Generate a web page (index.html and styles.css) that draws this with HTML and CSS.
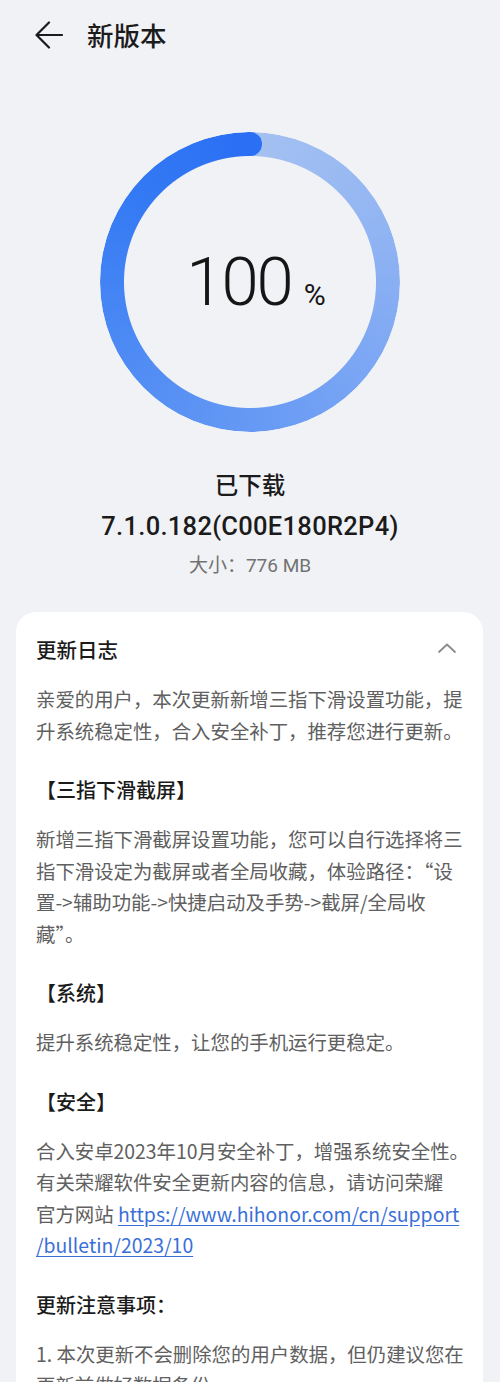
FILE: index.html
```html
<!DOCTYPE html>
<html lang="zh-CN">
<head>
<meta charset="utf-8">
<title>新版本</title>
<link rel="stylesheet" href="styles.css">
</head>
<body>
<div class="page">
  <header class="topbar">
    <svg class="back" width="28" height="28" viewBox="0 0 28 28" aria-hidden="true">
      <path d="M27 14H2M14 1.5L1.5 14 14 26.5" fill="none" stroke="#1b1b1b" stroke-width="2.2" stroke-linecap="round" stroke-linejoin="round"/>
    </svg>
    <h1 class="title">新版本</h1>
  </header>

  <section class="progress">
    <div class="ring">
      <div class="ring-track"></div>
      <div class="ring-cap"></div>
      <div class="ring-value"><span class="num">100</span><span class="pct">%</span></div>
    </div>
  </section>

  <section class="info">
    <div class="status">已下载</div>
    <div class="version">7.1.0.182(C00E180R2P4)</div>
    <div class="size">大小：776 MB</div>
  </section>

  <section class="card">
    <div class="card-head">
      <h2 class="card-title">更新日志</h2>
      <svg class="chev" width="20" height="12" viewBox="0 0 20 12" aria-hidden="true">
        <path d="M2 10L10 2.5 18 10" fill="none" stroke="#8a8a8a" stroke-width="1.8" stroke-linecap="round" stroke-linejoin="round"/>
      </svg>
    </div>
    <p class="para first">亲爱的用户，本次更新新增三指下滑设置功能，提<br>升系统稳定性，合入安全补丁，推荐您进行更新。</p>

    <h3 class="sec">【三指下滑截屏】</h3>
    <p class="para">新增三指下滑截屏设置功能，您可以自行选择将三<br>指下滑设定为截屏或者全局收藏，体验路径：“设<br>置-&gt;辅助功能-&gt;快捷启动及手势-&gt;截屏/全局收<br>藏”。</p>

    <h3 class="sec">【系统】</h3>
    <p class="para">提升系统稳定性，让您的手机运行更稳定。</p>

    <h3 class="sec">【安全】</h3>
    <p class="para">合入安卓2023年10月安全补丁，增强系统安全性。<br>有关荣耀软件安全更新内容的信息，请访问荣耀<br>官方网站 <a class="link" href="#">https://www.hihonor.com/cn/support<br>/bulletin/2023/10</a></p>

    <h3 class="sec">更新注意事项：</h3>
    <p class="para">1. 本次更新不会删除您的用户数据，但仍建议您在<br>更新前做好数据备份。</p>
  </section>
</div>
</body>
</html>
```

FILE: styles.css
```css
html, body {
  margin: 0;
  padding: 0;
}
body {
  background: #f1f2f6;
  font-family: Roboto, "Noto Sans CJK SC", sans-serif;
  color: #1b1b1b;
  height: 1382px;
  overflow: hidden;
}
.page {
  display: flex;
  flex-direction: column;
}

/* header */
.topbar {
  height: 70px;
  display: flex;
  align-items: center;
  padding-left: 35px;
  box-sizing: border-box;
}
.back {
  display: block;
  margin-top: -1px;
}
.title {
  margin: 0 0 0 24px;
  font-family: "Noto Sans CJK SC", sans-serif;
  font-size: 26.5px;
  font-weight: 500;
  line-height: 36px;
  color: #1b1b1b;
}

/* ring */
.progress {
  display: flex;
  justify-content: center;
  margin-top: 62px;
}
.ring {
  position: relative;
  width: 300px;
  height: 300px;
}
.ring-track {
  width: 300px;
  height: 300px;
  border-radius: 50%;
  background: conic-gradient(from 0deg,
    #a4c1f1 0deg,
    #94b6f2 60deg,
    #7ea8f4 120deg,
    #6599f4 180deg,
    #4a88f4 250deg,
    #3379f4 310deg,
    #2a6ff4 360deg);
  -webkit-mask: radial-gradient(circle, transparent 125.5px, #000 126.5px);
  mask: radial-gradient(circle, transparent 125.5px, #000 126.5px);
}
.ring-cap {
  position: absolute;
  top: 0;
  left: 138px;
  width: 24px;
  height: 24px;
  border-radius: 50%;
  background: #2a6ff4;
}
.ring-value {
  position: absolute;
  inset: 0;
  display: flex;
  align-items: baseline;
  justify-content: center;
  padding-top: 110px;
  box-sizing: border-box;
  padding-left: 12px;
}
.num {
  font-family: Roboto, sans-serif;
  font-weight: 300;
  font-size: 67px;
  letter-spacing: -2px;
  line-height: 80px;
  color: #151515;
}
.pct {
  font-family: Roboto, sans-serif;
  font-weight: 400;
  font-size: 30px;
  margin-left: 12px;
  color: #151515;
}

/* info */
.info {
  display: flex;
  flex-direction: column;
  align-items: center;
  margin-top: 36px;
}
.status {
  font-family: "Noto Sans CJK SC", sans-serif;
  font-size: 23.5px;
  font-weight: 500;
  line-height: 32px;
  color: #1b1b1b;
}
.version {
  margin-top: 10px;
  font-family: Roboto, "Noto Sans CJK SC", sans-serif;
  font-size: 25.5px;
  font-weight: 500;
  letter-spacing: 0.3px;
  line-height: 32px;
  color: #1b1b1b;
}
.size {
  margin-top: 10px;
  font-family: Roboto, "Noto Sans CJK SC", sans-serif;
  font-size: 19px;
  line-height: 28px;
  color: #727272;
}

/* card */
.card {
  margin: 32px 17px 0 16px;
  background: #ffffff;
  border-radius: 20px 20px 0 0;
  padding: 22px 14px 40px 20px;
}
.card-head {
  display: flex;
  align-items: center;
  justify-content: space-between;
  padding-right: 12px;
}
.card-title {
  margin: 0;
  font-family: "Noto Sans CJK SC", sans-serif;
  font-size: 20.5px;
  font-weight: 500;
  line-height: 30px;
  color: #1b1b1b;
}
.chev {
  display: block;
  margin-top: -2px;
}
.sec {
  margin: 29px 0 0 0;
  font-family: "Noto Sans CJK SC", sans-serif;
  font-size: 20px;
  font-weight: 500;
  line-height: 30px;
  color: #1b1b1b;
}
.para {
  margin: 18px 0 0 0;
  font-family: "Noto Sans CJK SC", sans-serif;
  font-size: 19.4px;
  line-height: 31.5px;
  color: #606060;
  white-space: nowrap;
}
.para.first {
  margin-top: 19px;
}
.link {
  color: #3a6fd8;
  text-decoration: underline;
  text-underline-offset: 3px;
}
```
